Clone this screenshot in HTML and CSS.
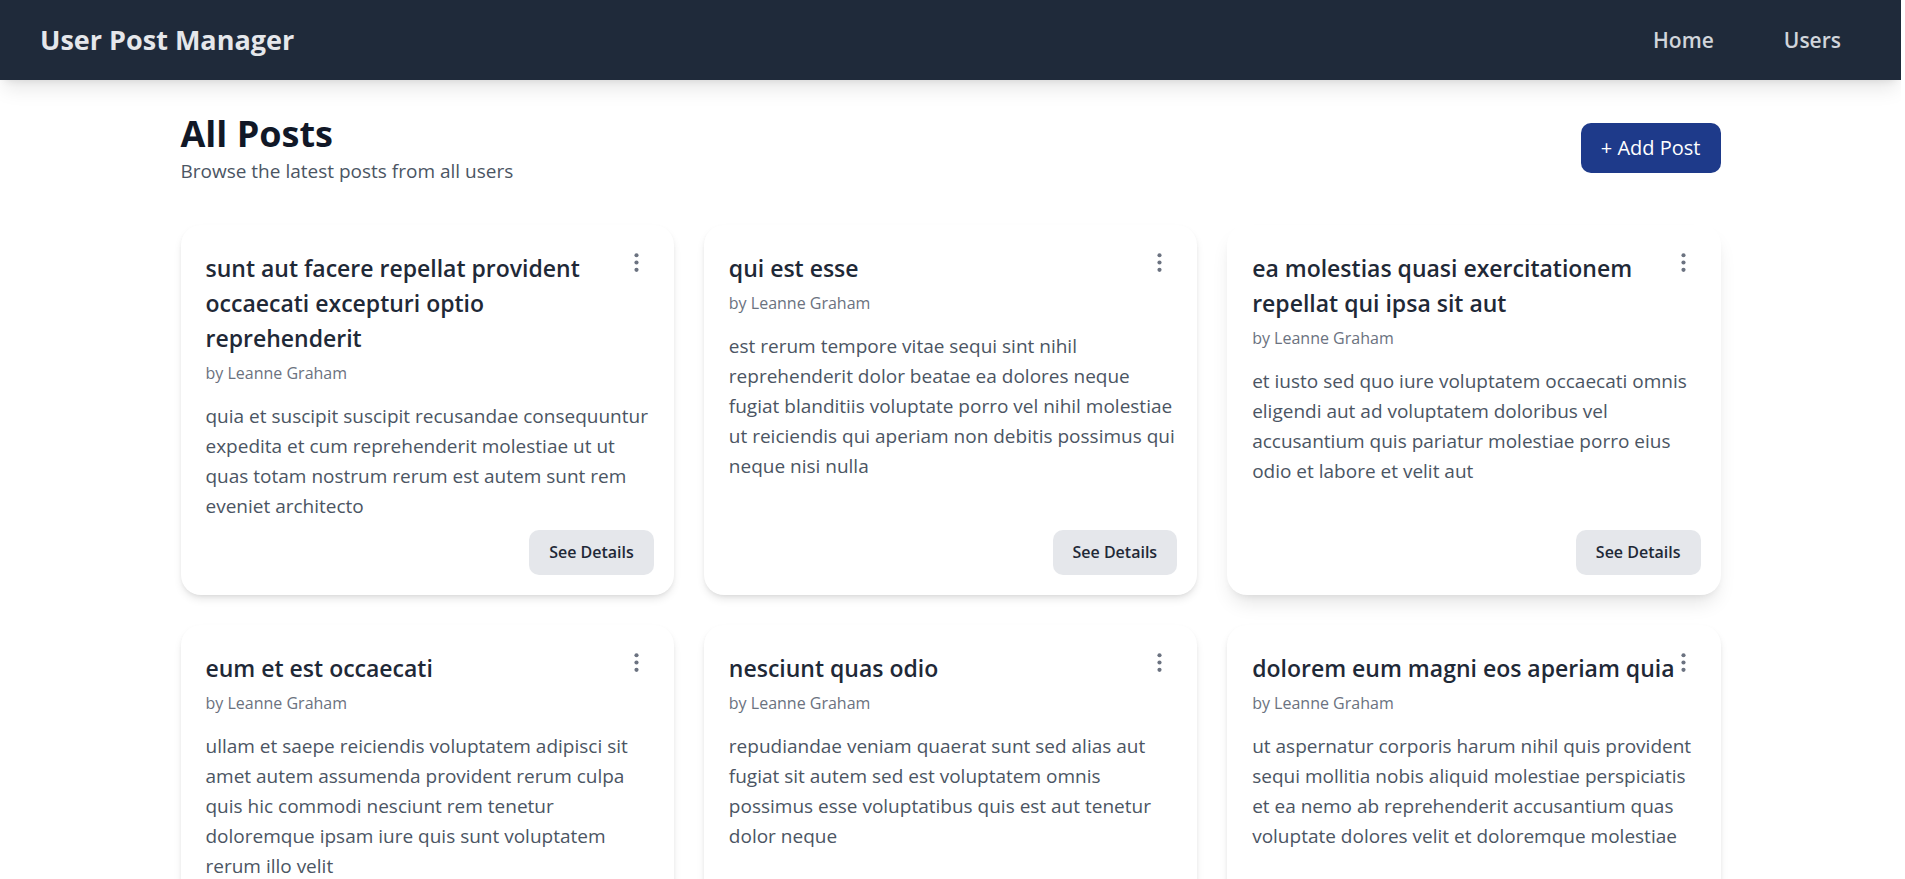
FILE: index.html
```html
<!DOCTYPE html>
<html lang="en">
<head>
<meta charset="utf-8">
<meta name="viewport" content="width=device-width, initial-scale=1">
<title>User Post Manager</title>
<link rel="stylesheet" href="styles.css">
</head>
<body>
<svg class="sprite" aria-hidden="true">
  <symbol id="dots" viewBox="0 0 24 24">
    <circle cx="12" cy="5" r="2"/><circle cx="12" cy="12" r="2"/><circle cx="12" cy="19" r="2"/>
  </symbol>
</svg>
<header class="navbar">
  <a class="brand" href="#">User Post Manager</a>
  <nav class="links">
    <a class="link" href="#">Home</a>
    <a class="link" href="#">Users</a>
  </nav>
</header>
<main class="content">
  <div class="page-head">
    <div>
      <h1 class="page-title">All Posts</h1>
      <p class="page-subtitle">Browse the latest posts from all users</p>
    </div>
    <button class="add-button" type="button">+ Add Post</button>
  </div>
  <section class="grid">
    <article class="card">
      <h2 class="card-title">sunt aut facere repellat provident occaecati excepturi optio reprehenderit</h2>
      <p class="author">by Leanne Graham</p>
      <p class="text">quia et suscipit suscipit recusandae consequuntur expedita et cum reprehenderit molestiae ut ut quas totam nostrum rerum est autem sunt rem eveniet architecto</p>
      <button class="details" type="button">See Details</button>
      <button class="menu" type="button" aria-label="Post options"><svg class="icon"><use href="#dots"/></svg></button>
    </article>
    <article class="card">
      <h2 class="card-title">qui est esse</h2>
      <p class="author">by Leanne Graham</p>
      <p class="text">est rerum tempore vitae sequi sint nihil reprehenderit dolor beatae ea dolores neque fugiat blanditiis voluptate porro vel nihil molestiae ut reiciendis qui aperiam non debitis possimus qui neque nisi nulla</p>
      <button class="details" type="button">See Details</button>
      <button class="menu" type="button" aria-label="Post options"><svg class="icon"><use href="#dots"/></svg></button>
    </article>
    <article class="card card-raised">
      <h2 class="card-title">ea molestias quasi exercitationem repellat qui ipsa sit aut</h2>
      <p class="author">by Leanne Graham</p>
      <p class="text">et iusto sed quo iure voluptatem occaecati omnis eligendi aut ad voluptatem doloribus vel accusantium quis pariatur molestiae porro eius odio et labore et velit aut</p>
      <button class="details" type="button">See Details</button>
      <button class="menu" type="button" aria-label="Post options"><svg class="icon"><use href="#dots"/></svg></button>
    </article>
    <article class="card">
      <h2 class="card-title">eum et est occaecati</h2>
      <p class="author">by Leanne Graham</p>
      <p class="text">ullam et saepe reiciendis voluptatem adipisci sit amet autem assumenda provident rerum culpa quis hic commodi nesciunt rem tenetur doloremque ipsam iure quis sunt voluptatem rerum illo velit</p>
      <button class="details" type="button">See Details</button>
      <button class="menu" type="button" aria-label="Post options"><svg class="icon"><use href="#dots"/></svg></button>
    </article>
    <article class="card">
      <h2 class="card-title">nesciunt quas odio</h2>
      <p class="author">by Leanne Graham</p>
      <p class="text">repudiandae veniam quaerat sunt sed alias aut fugiat sit autem sed est voluptatem omnis possimus esse voluptatibus quis est aut tenetur dolor neque</p>
      <button class="details" type="button">See Details</button>
      <button class="menu" type="button" aria-label="Post options"><svg class="icon"><use href="#dots"/></svg></button>
    </article>
    <article class="card">
      <h2 class="card-title">dolorem eum magni eos aperiam quia</h2>
      <p class="author">by Leanne Graham</p>
      <p class="text">ut aspernatur corporis harum nihil quis provident sequi mollitia nobis aliquid molestiae perspiciatis et ea nemo ab reprehenderit accusantium quas voluptate dolores velit et doloremque molestiae</p>
      <button class="details" type="button">See Details</button>
      <button class="menu" type="button" aria-label="Post options"><svg class="icon"><use href="#dots"/></svg></button>
    </article>
  </section>
</main>
</body>
</html>
```
FILE: styles.css
```css
* { box-sizing: border-box; margin: 0; }
html { background: #fff; scrollbar-width: none; }
body {
  margin: 0 4px 0 0;
  color: #1f2937;
  font: 19px/30px "Open Sans", "Noto Sans", sans-serif;
}
button { border: 0; font: inherit; cursor: pointer; }
a { text-decoration: none; }
.sprite { position: absolute; width: 0; height: 0; }

.navbar {
  display: flex;
  align-items: center;
  justify-content: space-between;
  height: 80px;
  padding: 0 60px 0 40px;
  background: #1f2a3a;
  box-shadow: 0 12px 19px -4px rgb(0 0 0 / 10%), 0 5px 8px -5px rgb(0 0 0 / 10%);
}
.brand { color: #e5e7eb; font-size: 27px; font-weight: 700; line-height: 40px; }
.links { display: flex; gap: 70px; }
.link { color: #d1d5db; font-size: 21px; font-weight: 600; }

.content { max-width: 1600px; margin: 0 auto; padding: 30px; }
.page-head {
  display: flex;
  align-items: center;
  justify-content: space-between;
  margin-bottom: 40px;
}
.page-title { color: #111827; font-size: 36px; font-weight: 700; line-height: 47px; }
.page-subtitle { color: #4b5563; line-height: 28px; }
.add-button {
  padding: 10px 20px;
  border-radius: 10px;
  background: #1e3a8a;
  color: #fff;
  font-size: 20px;
}

.grid { display: grid; grid-template-columns: repeat(3, 1fr); gap: 30px; }
.card {
  position: relative;
  display: flex;
  flex-direction: column;
  min-height: 370px;
  padding: 26px 20px 20px 25px;
  border-radius: 20px;
  background: #fff;
  box-shadow: 0 5px 8px -1px rgb(0 0 0 / 10%), 0 2px 5px -2px rgb(0 0 0 / 10%);
}
.card-raised {
  box-shadow: 0 12px 19px -4px rgb(0 0 0 / 10%), 0 5px 8px -5px rgb(0 0 0 / 10%);
}
.card-title { padding-right: 20px; font-size: 23px; font-weight: 600; line-height: 35px; }
.author { margin-top: 5px; color: #6b7280; font-size: 16px; line-height: 25px; }
.text { margin: 15px 0 9px; color: #4b5563; }
.details {
  align-self: flex-end;
  margin-top: auto;
  padding: 10px 20px;
  border-radius: 10px;
  background: #e5e7eb;
  color: #1f2937;
  font-size: 16px;
  font-weight: 600;
  line-height: 25px;
}
.menu {
  position: absolute;
  top: 20px;
  right: 20px;
  display: flex;
  padding: 5px;
  background: transparent;
}
.icon { width: 25px; height: 25px; fill: #6b7280; }

@media (max-width: 1100px) { .grid { grid-template-columns: repeat(2, 1fr); } }
@media (max-width: 720px) { .grid { grid-template-columns: 1fr; } }
```
